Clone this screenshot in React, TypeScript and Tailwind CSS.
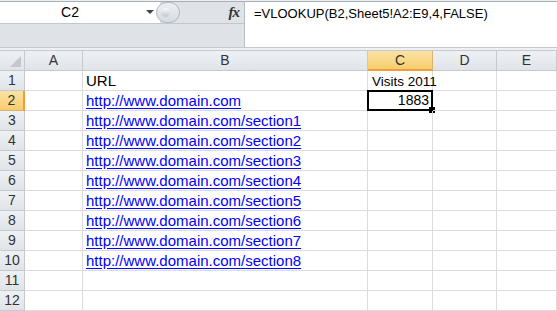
import React from "react";

const cols = [
    { key: "A", w: "w-[58px]" },
    { key: "B", w: "w-[285px]" },
    { key: "C", w: "w-[65px]" },
    { key: "D", w: "w-[64px]" },
    { key: "E", w: "flex-1" },
];

const urls: Record<number, string> = {
    2: "http://www.domain.com",
    3: "http://www.domain.com/section1",
    4: "http://www.domain.com/section2",
    5: "http://www.domain.com/section3",
    6: "http://www.domain.com/section4",
    7: "http://www.domain.com/section5",
    8: "http://www.domain.com/section6",
    9: "http://www.domain.com/section7",
    10: "http://www.domain.com/section8",
};

const FormulaBar: React.FC = () => (
    <div className="h-[46px] border-t border-[#a9b0b9] bg-[#dfe3e8] flex">
        <div className="w-[244px] flex flex-col">
            <div className="h-[21px] flex">
                <div className="w-[160px] bg-white flex items-center relative">
                    <span className="w-[140px] text-center text-[14px] text-black">C2</span>
                    <span className="absolute left-[146px] top-[8px] w-0 h-0 border-l-[4px] border-r-[4px] border-t-[4px] border-l-transparent border-r-transparent border-t-[#444]" />
                </div>
                <div className="flex-1 flex items-center relative">
                    <div className="absolute -left-[4px] top-[0px] w-[24px] h-[21px] rounded-full bg-gradient-to-b from-[#eef1f4] to-[#d6dbe1] border border-[#aeb5be] flex items-center justify-start pl-[4px]">
                        <div className="w-[9px] h-[9px] rounded-full bg-gradient-to-b from-[#fafbfc] to-[#c3c8cf]" />
                    </div>
                    <span className="ml-auto mr-[5px] text-[15px] italic font-bold text-[#333] [font-family:'Liberation_Serif',serif] tracking-[-1px]">fx</span>
                </div>
            </div>
            <div className="flex-1 border-t border-[#c2c8cf]" />
        </div>
        <div className="flex-1 bg-white border-l border-[#b7bdc5] pl-[9px] pt-[3px] text-[13px] text-black leading-[17px]">
            =VLOOKUP(B2,Sheet5!A2:E9,4,FALSE)
        </div>
    </div>
);

const App: React.FC = () => {
    const rows = Array.from({ length: 12 }, (_, i) => i + 1);

    return (
        <div className="w-[557px] h-[311px] overflow-hidden bg-white [font-family:'Liberation_Sans',Arial,sans-serif]">
            <div className="h-[1px] bg-[#eceef1]" />
            <FormulaBar />
            <div className="h-[3px] bg-[#eef0f3] border-t border-[#c4c9d0]" />

            {/* column headers */}
            <div className="h-[21px] flex border-t border-[#c6cacf] bg-[#e4e8ec] text-[14px] text-[#333]">
                <div className="w-[25px] border-r border-b border-[#c6cacf] relative bg-gradient-to-b from-[#eef1f4] to-[#e0e4e9]">
                    <svg className="absolute right-[3px] bottom-[3px]" width="11" height="11" viewBox="0 0 11 11">
                        <polygon points="11,0 11,11 0,11" fill="#c3c8ce" />
                    </svg>
                </div>
                {cols.map((c) =>
                    c.key === "C" ? (
                        <div
                            key={c.key}
                            className={`${c.w} flex items-center justify-center border-r border-b-2 border-r-[#d9b36a] border-b-[#f29b3a] bg-gradient-to-b from-[#fbe3a3] to-[#f6cd6c]`}
                        >
                            {c.key}
                        </div>
                    ) : (
                        <div
                            key={c.key}
                            className={`${c.w} flex items-center justify-center border-r border-b border-[#c6cacf] bg-gradient-to-b from-[#eef1f4] to-[#e0e4e9]`}
                        >
                            {c.key}
                        </div>
                    )
                )}
            </div>

            {/* rows */}
            {rows.map((r) => (
                <div key={r} className="h-[20px] flex">
                    <div
                        className={
                            r === 2
                                ? "w-[25px] flex items-center justify-center text-[14px] text-[#333] border-r-2 border-b border-r-[#f29b3a] border-b-[#d9b36a] bg-gradient-to-b from-[#fbe3a3] to-[#f6cd6c]"
                                : "w-[25px] flex items-center justify-center text-[14px] text-[#333] border-r border-b border-[#c6cacf] bg-gradient-to-b from-[#eef1f4] to-[#e0e4e9]"
                        }
                    >
                        {r}
                    </div>
                    {cols.map((c) => {
                        const isSel = r === 2 && c.key === "C";
                        return (
                            <div
                                key={c.key}
                                className={`${c.w} border-r border-b border-[#dadcdd] relative text-[15px] leading-[19px] whitespace-nowrap`}
                            >
                                {c.key === "B" && r === 1 && <span className="pl-[3px] text-black">URL</span>}
                                {c.key === "B" && urls[r] && (
                                    <span className="pl-[3px] text-[#0000ff] underline underline-offset-[2px]">{urls[r]}</span>
                                )}
                                {c.key === "C" && r === 1 && (
                                    <span className="pl-[4px] text-black text-[13.5px]">Visits 2011</span>
                                )}
                                {isSel && (
                                    <div className="absolute -left-[1px] -top-[1px] w-[66px] h-[21px] border-2 border-black flex items-center justify-end pr-[2px] text-[14px] text-black">
                                        1883
                                        <div className="absolute -right-[4px] -bottom-[4px] w-[6px] h-[6px] bg-black" />
                                    </div>
                                )}
                            </div>
                        );
                    })}
                </div>
            ))}
        </div>
    );
};

export default App;
